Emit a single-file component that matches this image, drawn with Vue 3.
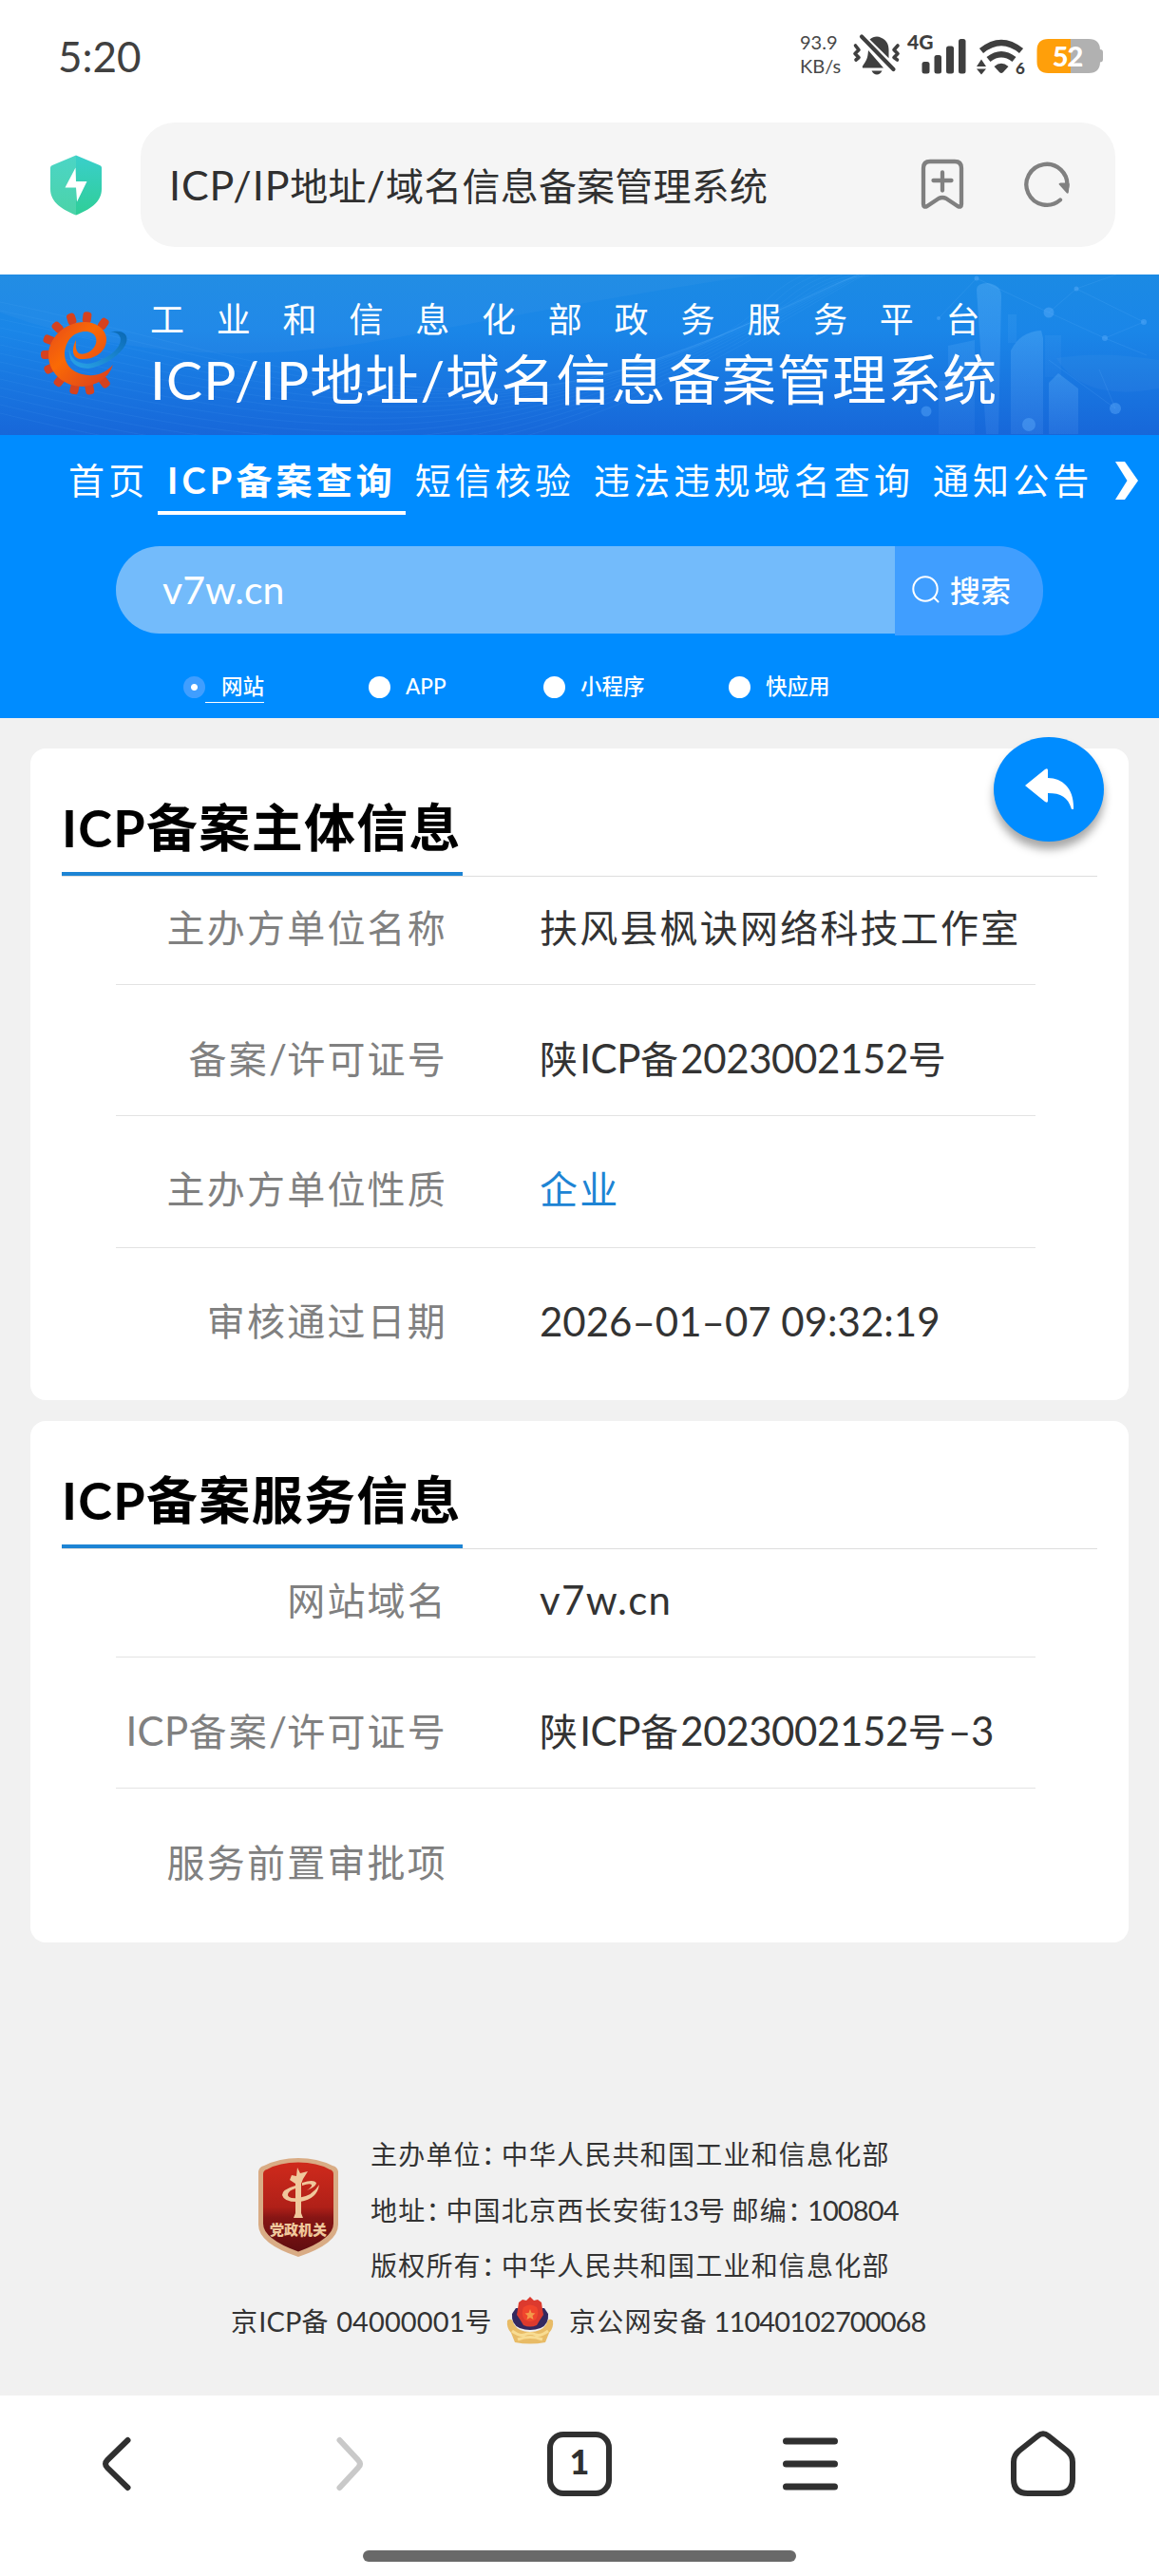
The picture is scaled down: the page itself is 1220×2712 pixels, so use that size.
<template>
  <div class="page">
    <div class="status-bar">
      <span class="clock">5:20</span>
      <div class="net-speed">
        <span>93.9</span>
        <span>KB/s</span>
      </div>
      <svg class="status-icons" width="324" height="60" viewBox="896 26 324 60">
        <g fill="#3f3f3f">
          <path d="M909 68 q-2 2 -1 3.500 h22 L914 53 c-.5 8 -2 11 -5 15z" />
          <path d="M915.500 41.500 c3.500 -3 8 -4.200 12 -1.800 6 2.500 8 7.500 8 12.500 v9 z" />
          <path d="M917.500 74.500 h11 q-2 4 -5.500 4 t-5.500 -4z" />
          <rect x="970.500" y="65" width="8" height="12.500" rx="2.500" />
          <rect x="983.500" y="58" width="7.500" height="19.500" rx="2.500" />
          <rect x="996" y="48.500" width="8" height="29" rx="2.500" />
          <rect x="1009" y="41" width="7.500" height="36.500" rx="2.500" />
          <path d="M1046.500 70 q7.500 -6.500 15 0 l-5.500 6 q-2 1.800 -4 0z" />
          <path d="M1028 70 l5 -7.500 5 7.500z M1028 72.500 h10 l-5 6z" />
        </g>
        <g fill="none" stroke="#3f3f3f" stroke-linecap="round" stroke-linejoin="round">
          <path d="M907 38.500 L940.500 73" stroke-width="4.200" />
          <path d="M900.500 48 l3.500 4.500 -4 4 4 4 -3 2.500" stroke-width="3.600" />
          <path d="M945 48 l-4 4.500 4 4 -4 4 3.500 2.500" stroke-width="3.600" />
          <path d="M1033 53.500 q21 -17 42 0" stroke-width="6.500" stroke-linecap="butt" />
          <path d="M1040.500 62.500 q13.500 -10.500 27 0" stroke-width="6.500" stroke-linecap="butt" />
        </g>
        <text class="net-type" x="955" y="51.500">4G</text>
        <text class="wifi-gen" x="1069" y="78">6</text>
        <path d="M1127 41 h19 q12 0 12 12 v12 q0 12 -12 12 h-19z M1156 52 h2 q3 0 3 3 v7.500 q0 3 -3 3 h-2z" fill="#b1b1b1" />
        <path d="M1127 41 h-23.500 q-12 0 -12 12 v12 q0 12 12 12 h23.500z" fill="#ff9f0a" />
        <text class="battery" x="1123.500" y="69.500">52</text>
      </svg>
    </div>

    <div class="address-bar">
      <svg class="shield" width="56" height="66" viewBox="0 0 56 66">
        <defs>
          <linearGradient id="shieldL" x1="0" y1="0" x2="0" y2="1">
            <stop offset="0" stop-color="#4bd5c6" />
            <stop offset="1" stop-color="#4cd3a8" />
          </linearGradient>
          <linearGradient id="shieldR" x1="0" y1="0" x2="0" y2="1">
            <stop offset="0" stop-color="#3acfcb" />
            <stop offset="1" stop-color="#2fce97" />
          </linearGradient>
        </defs>
        <path d="M28 1.500 L3 12 q-2 .8 -2 2.500 V37 C1 51 14 59 28 64.500z" fill="url(#shieldL)" />
        <path d="M28 1.500 L53 12 q2 .8 2 2.500 V37 C55 51 42 59 28 64.500z" fill="url(#shieldR)" />
        <path d="M27.500 14.500 L16.500 35.500 h11.500 l1 15 L39.500 29 H28z" fill="#fff" />
      </svg>
      <div class="address">
        <span class="address-text">
          <span v-for="(part, i) in split(siteName)" :key="i" :class="{ latin: part.latin }">{{ part.text }}</span>
        </span>
        <svg width="48" height="54" viewBox="0 0 48 54" class="bookmark">
          <path d="M11 3 h26 q7 0 7 7 v38 q0 4 -4 2 l-12 -8 q-4 -2 -8 0 l-12 8 q-4 2 -4 -2 V10 q0 -7 7 -7z M24 14.500 v19 M14.500 23 h19"
            fill="none" stroke="#808080" stroke-width="4.300" stroke-linecap="round" stroke-linejoin="round" />
        </svg>
        <svg width="50" height="50" viewBox="0 0 50 50" class="reload">
          <path d="M39 41.500 A21.500 21.500 0 1 1 46.200 28" fill="none" stroke="#808080" stroke-width="4.300" stroke-linecap="round" />
          <path d="M37.500 25 q0 -1.500 2 -1.500 h7.500 q2 0 1.700 2 l-.9 8 q-.6 2 -2 .8z" fill="#808080" />
        </svg>
      </div>
    </div>

    <header class="banner">
      <svg class="banner-art" width="1220" height="169" viewBox="0 0 1220 169">
        <defs>
          <linearGradient id="tower" x1="0" y1="0" x2="0" y2="1">
            <stop offset="0" stop-color="#7cc4ff" stop-opacity=".26" />
            <stop offset="1" stop-color="#7cb4ff" stop-opacity=".12" />
          </linearGradient>
        </defs>
        <g fill="none" stroke="#6fc0ff" stroke-opacity=".09">
          <path v-for="n in 14" :key="n" :d="wave(n)" />
        </g>
        <path d="M0 40 Q190 110 420 66 T800 0 H0z" fill="#fff" opacity=".03" />
        <g fill="url(#tower)">
          <path d="M1028 16 q0 -7 12 -7 14 2 14 14 l-3 145 h-13z" />
          <path d="M1064 80 q10 -20 32 -21 l2 8 v101 h-34z" />
          <path d="M1104 125 V114 l10 -10 21 16 v48 h-31z" />
          <path d="M998 75 l28 -6 v99 h-38 v-56 h10z" opacity=".6" />
          <path d="M1100 64 h17 v44 h-17z M1061 42 h9 v30 h-9z" opacity=".4" />
        </g>
        <path d="M1112 88 Q1160 80 1220 90 V120 Q1140 135 1112 88z" fill="#fff" opacity=".03" />
        <path d="M1028 4 L1104 40 1133 15 1204 50 M1104 40 L1163 67 1207 85 M1163 67 L1204 50 M1133 15 L1175 0 M1104 90 L1174 141 1157 100 M1028 4 L988 46"
          stroke="#7cc4ff" stroke-opacity=".13" fill="none" />
        <g fill="#67b4ff" opacity=".38">
          <circle cx="1104" cy="40" r="5.500" />
          <circle cx="1133" cy="15" r="2.500" />
          <circle cx="1163" cy="67" r="3" />
          <circle cx="1204" cy="50" r="3" />
          <circle cx="1174" cy="141" r="6" />
          <circle cx="975" cy="144" r="5.500" />
          <circle cx="1083" cy="158" r="7" />
          <circle cx="1028" cy="4" r="2.500" />
          <circle cx="988" cy="46" r="2" />
        </g>
      </svg>
      <svg class="logo" width="94" height="92" viewBox="0 0 94 92">
        <defs>
          <linearGradient id="orbit" x1="0" y1="1" x2="1" y2="0">
            <stop offset="0" stop-color="#2aa5ea" />
            <stop offset="1" stop-color="#0a68b4" />
          </linearGradient>
          <linearGradient id="gear" x1="0" y1="0" x2="1" y2="1">
            <stop offset="0" stop-color="#e5491c" />
            <stop offset=".4" stop-color="#fa6a05" />
            <stop offset="1" stop-color="#d83c20" />
          </linearGradient>
        </defs>
        <path d="M32 40 C33 55 46 60 60 55 C76 49 86 40 86 31 C85 25 80 23 74 24 C88 20 96 26 91 37 C84 50 66 60 52 62 C38 62 30 54 32 40z" fill="url(#orbit)" />
        <g fill="#d5421f">
          <rect v-for="a in teeth" :key="a" x="41.500" y="2" width="9" height="12" rx="3.500" :transform="`rotate(${a} 46 46)`" />
        </g>
        <path d="M39 32 C33 44 36 53 47 52 C62 52 72 41 71 30 C70 20 60 13 48 13 C27 13 10 30 10 48 C10 66 26 81 46 81 C60 80 73 73 78 58 C70 67 60 70 52 69 C38 68 27 60 27 46 C28 32 37 23 49 23 C60 23 64 33 57 41 C52 47 43 48 41 45 C38 41 39 36 39 32z" fill="url(#gear)" />
      </svg>
      <div class="banner-titles">
        <div class="banner-sub">工业和信息化部政务服务平台</div>
        <div class="banner-main">
          <span v-for="(part, i) in split(siteName)" :key="i" :class="{ latin: part.latin }">{{ part.text }}</span>
        </div>
      </div>
    </header>

    <section class="query">
      <nav class="tabs">
        <a v-for="tab in tabs" :key="tab" class="tab" :class="{ active: tab === activeTab }" @click="activeTab = tab">{{ tab }}</a>
        <svg class="more" width="26" height="40" viewBox="0 0 26 40">
          <path d="M1 0 h10 L25 20 11 40 H1 L13.500 20z" fill="#fff" />
        </svg>
      </nav>
      <div class="search">
        <input v-model="keyword" class="search-input" type="text" />
        <button class="search-btn">
          <svg width="29" height="29" viewBox="0 0 29 29">
            <path d="M23.500 23.500 L27.500 27.500" stroke="#fff" stroke-width="2" stroke-linecap="round" />
            <circle cx="14" cy="14" r="12.700" fill="none" stroke="#fff" stroke-width="2" />
          </svg>
          <span>搜索</span>
        </button>
      </div>
      <div class="kinds">
        <label v-for="kind in kinds" :key="kind" class="kind" :class="{ checked: kind === activeKind }" @click="activeKind = kind">
          <i class="dot"></i><span class="kind-text">{{ kind }}</span>
        </label>
      </div>
    </section>

    <main class="content">
      <section v-for="card in cards" :key="card.title" class="card">
        <div class="card-head"><h2 class="card-title">{{ card.title }}</h2></div>
        <dl class="rows">
          <div v-for="row in card.rows" :key="row.label" class="row">
            <dt><span v-for="(part, i) in split(row.label)" :key="i" :class="{ latin: part.latin }">{{ part.text }}</span></dt>
            <dd :class="row.kind"><span v-for="(part, i) in split(row.value)" :key="i" :class="{ latin: part.latin }">{{ part.text }}</span></dd>
          </div>
        </dl>
      </section>
      <button class="back-float" aria-label="返回">
        <svg width="52" height="44" viewBox="0 0 52 44">
          <path d="M0 18 L21 1 q3 -2 3 1 V10 C40 10 52 22 51 43 h-2 C45 30 38 26 24 26 V34 q0 3 -3 1z" fill="#fff" />
        </svg>
      </button>
    </main>

    <footer class="footer">
      <div class="footer-top">
        <svg class="emblem" width="84" height="104" viewBox="0 0 84 104">
          <defs>
            <linearGradient id="red" x1="0" y1="0" x2="0" y2="1">
              <stop offset="0" stop-color="#cf2a1c" />
              <stop offset=".5" stop-color="#b02018" />
              <stop offset=".62" stop-color="#861514" />
              <stop offset="1" stop-color="#5f0d10" />
            </linearGradient>
          </defs>
          <path d="M42 0 Q62 0 78 8 q5 1 6 6 V70 Q84 90 42 104 Q0 90 0 70 V14 q1 -5 6 -6 Q22 0 42 0z" fill="#d9ac85" />
          <path d="M42 4.500 Q62 4.500 75 12 q4 1 4 5 V69 Q79 85 42 98.500 Q5 85 5 69 V17 q0 -4 4 -5 Q22 4.500 42 4.500z" fill="url(#red)" />
          <path d="M41 10 l3 6 8 -2 -5 8 -2 5 v31 l2 5 h-10 l2 -5 V27 l-6 -4 2 -5 5 1z" fill="#f0c89c" />
          <path d="M39 29 q-14 4 -14 10 q2 8 19 7 q18 -3 20 -18 q-7 12 -22 14 q-12 1 -11 -4 q1 -4 8 -6z M46 26 q12 -4 15 0 q0 4 -10 8 q6 -4 5 -6 q-2 -2 -10 1z" fill="#f0c89c" />
          <text class="emblem-text" x="42" y="81">党政机关</text>
        </svg>
        <div class="footer-lines">
          <p v-for="line in footerLines" :key="line">
            <span v-for="(part, i) in split(line)" :key="i" :class="{ latin: part.latin, colon: part.text === '：' }">{{ part.text }}</span>
          </p>
        </div>
      </div>
      <div class="footer-bottom">
        <span class="record"><span v-for="(part, i) in split('京ICP备 04000001号')" :key="i" :class="{ latin: part.latin }">{{ part.text }}</span></span>
        <svg class="police" width="50" height="52" viewBox="0 0 50 52">
          <path d="M1 26 q5 -4 7 4 q5 8 17 8 q12 0 17 -8 q2 -8 7 -4 q1 8 -4 13 l-4 10 q-16 3 -32 0 l-4 -10 q-5 -5 -4 -13z" fill="#e8bb66" />
          <path d="M6 37 q8 6 13 4 q6 -3 12 0 q5 2 13 -4 M12 46 q13 -5 26 0" fill="none" stroke="#f8dc92" stroke-width="3" />
          <path d="M10 13 l-4 6 q-1 11 8 15 q11 4 22 0 q9 -4 8 -15 l-4 -6z" fill="#33285f" />
          <path d="M13 7 l4 -3 4 1 4 -4 4 4 4 -1 4 3 1 7 1 6 -4 6 -3 5 q-7 3 -14 0 l-3 -5 -4 -6 1 -6z" fill="#dc3a2e" />
          <path d="M18 12 q7 -5 14 0 q3 6 -1 13 q-6 4 -12 0 q-4 -6 -1 -13z" fill="#f0452c" />
          <path d="M25 14 l1.500 4 4 .5 -3 2.500 1 4 -3.500 -2 -3.500 2 1 -4 -3 -2.500 4 -.5z" fill="#f39a4a" />
        </svg>
        <span><span v-for="(part, i) in split('京公网安备 11040102700068')" :key="i" :class="{ latin: part.latin }">{{ part.text }}</span></span>
      </div>
    </footer>

    <div class="toolbar">
      <div class="tool">
        <svg width="70" height="72" viewBox="0 0 70 72">
          <path d="M47.500 11 L26 32 q-4 4 0 8 L47.500 61" fill="none" stroke="#303030" stroke-width="6" stroke-linecap="round" />
        </svg>
      </div>
      <div class="tool">
        <svg width="70" height="72" viewBox="0 0 70 72">
          <path d="M26.500 11 L46 32 q4 4 0 8 L26.500 61" fill="none" stroke="#c9c9c9" stroke-width="6" stroke-linecap="round" />
        </svg>
      </div>
      <div class="tool"><span class="tab-count">1</span></div>
      <div class="tool">
        <svg width="70" height="72" viewBox="0 0 70 72">
          <path d="M8.500 12 h51 M8.500 36 h51 M8.500 60 h51" stroke="#303030" stroke-width="7" stroke-linecap="round" />
        </svg>
      </div>
      <div class="tool">
        <svg width="70" height="72" viewBox="0 0 70 72">
          <path d="M29.500 6.500 q5.500 -4.500 11 0 L60 22 q6 5 6 12 v18 q0 15 -15 15 H19 q-15 0 -15 -15 V34 q0 -7 6 -12z"
            fill="none" stroke="#303030" stroke-width="6" stroke-linejoin="round" />
        </svg>
      </div>
    </div>
    <div class="home-indicator"></div>
  </div>
</template>

<script setup>
import { ref } from 'vue'

const siteName = 'ICP/IP地址/域名信息备案管理系统'

const tabs = ['首页', 'ICP备案查询', '短信核验', '违法违规域名查询', '通知公告']
const activeTab = ref('ICP备案查询')

const kinds = ['网站', 'APP', '小程序', '快应用']
const activeKind = ref('网站')

const keyword = ref('v7w.cn')

const cards = [
  {
    title: 'ICP备案主体信息',
    rows: [
      { label: '主办方单位名称', value: '扶风县枫诀网络科技工作室' },
      { label: '备案/许可证号', value: '陕ICP备2023002152号' },
      { label: '主办方单位性质', value: '企业', kind: 'link' },
      { label: '审核通过日期', value: '2026–01–07 09:32:19', kind: 'date' }
    ]
  },
  {
    title: 'ICP备案服务信息',
    rows: [
      { label: '网站域名', value: 'v7w.cn', kind: 'domain' },
      { label: 'ICP备案/许可证号', value: '陕ICP备2023002152号–3' },
      { label: '服务前置审批项', value: '' }
    ]
  }
]

const footerLines = [
  '主办单位：中华人民共和国工业和信息化部',
  '地址：中国北京西长安街13号 邮编：100804',
  '版权所有：中华人民共和国工业和信息化部'
]

// Latin runs and full-width colons get their own spacing
const split = (text) =>
  text
    .split(/([\x20-\x7e–]+|：)/)
    .filter(Boolean)
    .map((t) => ({ text: t, latin: /^[\x20-\x7e–]/.test(t) }))

const teeth = [7, 35, -18, -44, -68, -92, -115, -140, -167, 169, 143]

const wave = (n) => `M0 ${20 + n * 9} C${200 + n * 10} ${60 + n * 12} ${420 + n * 8} ${150 + n * 5} ${620 + n * 14} ${110 - n * 4} S${760 + n * 10} 20 ${860 + n * 16} -10`
</script>

<style>
body {
  background: #f1f1f1;
}
</style>

<style scoped>
.page {
  width: 1220px;
  height: 2712px;
  display: flex;
  flex-direction: column;
  overflow: hidden;
  background: #f1f1f1;
  color: #333;
  font-family: Lato, "Noto Sans CJK SC", sans-serif;
}

.page svg {
  display: block;
  flex: none;
}

.latin {
  white-space: pre;
}

/* status bar */
.status-bar {
  height: 112px;
  display: flex;
  align-items: flex-start;
  background: #fff;
  padding: 25px 0 0 61px;
  box-sizing: border-box;
}

.clock {
  width: 781px;
  font-size: 44px;
  line-height: 68px;
  color: #404040;
}

.net-speed {
  width: 54px;
  display: flex;
  flex-direction: column;
  padding-top: 7px;
  font-size: 20px;
  line-height: 25px;
  color: #484848;
}

.status-icons {
  margin-top: 1px;
}

.net-type {
  font-size: 21px;
  font-weight: 900;
  fill: #3f3f3f;
}

.wifi-gen {
  font-size: 17px;
  font-weight: 900;
  fill: #3f3f3f;
}

.battery {
  font-size: 29px;
  font-weight: 900;
  letter-spacing: -1px;
  fill: #fff;
  text-anchor: middle;
}

/* address bar */
.address-bar {
  height: 177px;
  display: flex;
  align-items: flex-start;
  background: #fff;
  padding: 17px 46px 0 52px;
  box-sizing: border-box;
}

.shield {
  margin: 33px 40px 0 0;
}

.address {
  flex: 1;
  height: 131px;
  display: flex;
  align-items: center;
  border-radius: 36px;
  background: #f5f5f5;
  padding: 0 47px 2px 30px;
  box-sizing: border-box;
}

.address-text {
  flex: 1;
  font-size: 40px;
  letter-spacing: 0.200px;
  color: #303030;
  white-space: nowrap;
}

.address-text .latin {
  font-size: 43px;
  letter-spacing: 0.900px;
}

.bookmark {
  margin-right: 61px;
}

/* banner */
.banner {
  position: relative;
  height: 169px;
  display: flex;
  background: linear-gradient(#1b8ae4, #1a86e8 35%, #1767d9);
  color: #fff;
}

.banner-art {
  position: absolute;
  left: 0;
  top: 0;
}

.logo {
  position: relative;
  margin: 37px 0 0 41px;
}

.banner-titles {
  position: relative;
  margin-left: 23px;
  padding-top: 22px;
  white-space: nowrap;
}

.banner-sub {
  font-size: 36px;
  line-height: 50px;
  letter-spacing: 33.800px;
}

.banner-main {
  font-size: 57px;
  line-height: 76px;
  letter-spacing: 1.100px;
}

/* query */
.query {
  height: 298px;
  background: #008cff;
  color: #fff;
}

.tabs {
  height: 117px;
  display: flex;
  align-items: flex-start;
  padding: 14px 0 0 62px;
  box-sizing: border-box;
}

.tab {
  padding: 0 9.700px 0 10px;
  font-size: 38px;
  line-height: 66px;
  letter-spacing: 4.150px;
  border-bottom: 4px solid transparent;
  white-space: nowrap;
}

.tab.active {
  font-weight: 700;
  border-bottom-color: #fff;
}

.more {
  margin: 14px 0 0 13px;
}

.search {
  display: flex;
  align-items: flex-start;
  padding-left: 122px;
}

.search-input {
  width: 820px;
  height: 92px;
  box-sizing: border-box;
  border: none;
  outline: none;
  border-radius: 46px 0 0 46px;
  background: #73bbfb;
  color: #fff;
  padding: 0 0 2px 49px;
  font-family: inherit;
  font-size: 41px;
}

.search-btn {
  width: 156px;
  height: 94px;
  display: flex;
  align-items: center;
  gap: 11px;
  border: none;
  border-radius: 0 46px 46px 0;
  background: #409eff;
  color: #fff;
  padding: 0 0 4px 18px;
  font-family: inherit;
  font-size: 32px;
  font-weight: 500;
}

.kinds {
  display: flex;
  align-items: flex-start;
  padding: 38px 0 0 193px;
}

.kind {
  display: flex;
  align-items: center;
  font-size: 22.500px;
  line-height: 32px;
  font-weight: 500;
  width: 195px;
}

.kind:nth-child(2) {
  width: 184px;
}

.dot {
  width: 23px;
  height: 23px;
  border-radius: 50%;
  background: #fff;
}

.kind-text {
  margin-left: 16px;
}

.checked .dot {
  background: radial-gradient(circle, #fff 3px, #409eff 4px);
}

.checked .kind-text {
  margin-left: 0;
  padding-left: 17px;
  border-bottom: 1px solid #fff;
}

/* record cards */
.content {
  position: relative;
  padding: 32px 32px 0;
}

.card {
  background: #fff;
  border-radius: 16px;
  padding: 0 33px;
  height: 686px;
  box-sizing: border-box;
}

.card + .card {
  margin-top: 22px;
  height: 549px;
}

.card-head {
  height: 134px;
  display: flex;
  align-items: flex-end;
  border-bottom: 1px solid #dedede;
}

.card-title {
  margin: 0;
  padding: 0 1px 4px 0;
  font-size: 54px;
  line-height: 84px;
  font-weight: 700;
  letter-spacing: 1.300px;
  color: #000;
  white-space: nowrap;
  border-bottom: 4px solid #1d84d4;
}

.rows {
  margin: 0;
  padding: 0 65px 0 57px;
}

.row {
  display: flex;
  align-items: center;
  height: 138.300px;
  box-sizing: border-box;
  padding-top: 17px;
  border-bottom: 1px solid #e3e3e3;
  font-size: 40px;
  line-height: 60px;
  letter-spacing: 2.200px;
  white-space: nowrap;
}

.row:first-child {
  height: 114px;
  padding: 0 0 6px;
}

.row:last-child {
  border-bottom: none;
}

.row .latin {
  font-size: 42px;
  letter-spacing: -0.400px;
}

.row dt {
  width: 349px;
  text-align: right;
  color: #808080;
}

.row dt .latin {
  letter-spacing: 0.300px;
}

.row dd {
  margin: 0 0 0 97px;
  color: #333;
}

.row dd.link {
  color: #1d84d4;
}

.row .date .latin {
  letter-spacing: 0;
}

.row .domain .latin {
  letter-spacing: 1.300px;
}

.back-float {
  position: absolute;
  right: 58px;
  top: 20px;
  width: 116px;
  height: 110px;
  display: flex;
  align-items: center;
  justify-content: center;
  border: none;
  border-radius: 50%;
  background: #008cff;
  box-shadow: 0 8px 10px rgba(0, 0, 0, 0.35);
  padding: 0 0 0 2px;
}

/* footer */
.footer {
  flex: 1;
  font-size: 28px;
  letter-spacing: 1.200px;
  white-space: nowrap;
}

.footer .latin {
  font-size: 29px;
  letter-spacing: -0.900px;
}

.footer-top {
  display: flex;
  padding: 194px 0 0 272px;
}

.emblem {
  margin: 33px 34px 0 0;
}

.emblem-text {
  font-size: 15px;
  font-weight: 900;
  letter-spacing: 0;
  fill: #f0c89c;
  text-anchor: middle;
}

.footer-lines p {
  margin: 0;
  line-height: 58.500px;
}

.footer .colon {
  letter-spacing: -7px;
}

.footer-bottom {
  display: flex;
  align-items: center;
  height: 57px;
  padding-left: 243px;
}

.record {
  width: 275px;
}

.footer .record .latin {
  letter-spacing: 0.100px;
}

.police {
  margin: 0 16px 0 15px;
}

/* browser toolbar */
.toolbar {
  height: 144px;
  display: flex;
  align-items: center;
  background: #fff;
}

.tool {
  flex: 1;
  display: flex;
  justify-content: center;
}

.tab-count {
  width: 56px;
  height: 56px;
  border: 6px solid #303030;
  border-radius: 17px;
  text-align: center;
  font-size: 36px;
  line-height: 50px;
  font-weight: 900;
  color: #303030;
}

.home-indicator {
  height: 46px;
  display: flex;
  justify-content: center;
  background: #fff;
  padding-top: 19px;
  box-sizing: border-box;
}

.home-indicator::after {
  content: "";
  width: 456px;
  height: 12px;
  border-radius: 6px;
  background: #696969;
}
</style>
